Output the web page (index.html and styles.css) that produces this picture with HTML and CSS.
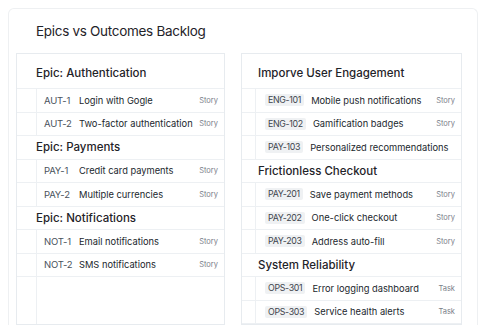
FILE: index.html
```html
<!DOCTYPE html>
<html lang="en">
<head>
  <meta charset="UTF-8">
  <title>Epics vs Outcomes Backlog</title>
  <link rel="stylesheet" href="styles.css">
</head>
<body>

  <div class="board">
    <h1 class="board-title">Epics vs Outcomes Backlog</h1>

    <div class="columns">
      <!-- Epics column -->
      <div class="panel panel-epics">
        <div class="group-title first">Epic: Authentication</div>
        <div class="row"><div class="row-body"><span class="key">AUT-1</span><span class="name">Login with Gogle</span><span class="type">Story</span></div></div>
        <div class="row"><div class="row-body"><span class="key">AUT-2</span><span class="name">Two-factor authentication</span><span class="type">Story</span></div></div>

        <div class="group-title">Epic: Payments</div>
        <div class="row"><div class="row-body"><span class="key">PAY-1</span><span class="name">Credit card payments</span><span class="type">Story</span></div></div>
        <div class="row"><div class="row-body"><span class="key">PAY-2</span><span class="name">Multiple currencies</span><span class="type">Story</span></div></div>

        <div class="group-title">Epic: Notifications</div>
        <div class="row"><div class="row-body"><span class="key">NOT-1</span><span class="name">Email notifications</span><span class="type">Story</span></div></div>
        <div class="row"><div class="row-body"><span class="key">NOT-2</span><span class="name">SMS notifications</span><span class="type">Story</span></div></div>

        <div class="filler"><div class="row-body"></div></div>
      </div>

      <!-- Outcomes column -->
      <div class="panel panel-outcomes">
        <div class="group-title first">Imporve User Engagement</div>
        <div class="row"><div class="row-body"><span class="key">ENG-101</span><span class="name">Mobile push notifications</span><span class="type">Story</span></div></div>
        <div class="row"><div class="row-body"><span class="key">ENG-102</span><span class="name">Gamification badges</span><span class="type">Story</span></div></div>
        <div class="row"><div class="row-body"><span class="key">PAY-103</span><span class="name">Personalized recommendations</span></div></div>

        <div class="group-title">Frictionless Checkout</div>
        <div class="row"><div class="row-body"><span class="key">PAY-201</span><span class="name">Save payment methods</span><span class="type">Story</span></div></div>
        <div class="row"><div class="row-body"><span class="key">PAY-202</span><span class="name">One-click checkout</span><span class="type">Story</span></div></div>
        <div class="row"><div class="row-body"><span class="key">PAY-203</span><span class="name">Address auto-fill</span><span class="type">Story</span></div></div>

        <div class="group-title">System Reliability</div>
        <div class="row"><div class="row-body"><span class="key">OPS-301</span><span class="name">Error logging dashboard</span><span class="type">Task</span></div></div>
        <div class="row"><div class="row-body"><span class="key">OPS-303</span><span class="name">Service health alerts</span><span class="type">Task</span></div></div>
      </div>
    </div>
  </div>

</body>
</html>
```

FILE: styles.css
```css
* {
  margin: 0;
  padding: 0;
  box-sizing: border-box;
}

body {
  font-family: 'Inter', 'Liberation Sans', sans-serif;
  background-color: #fff;
  color: #1f2329;
  overflow: hidden;
}

.board {
  margin: 8px 8px 0 8px;
  width: 470px;
  border: 1px solid #eef0f2;
  border-bottom: none;
  border-radius: 6px 6px 0 0;
  padding: 0 7px;
}

.board-title {
  font-size: 13.5px;
  font-weight: 400;
  letter-spacing: -0.3px;
  line-height: 20px;
  padding: 12px 0 12px 20px;
  color: #1f2329;
}

.columns {
  display: grid;
  grid-template-columns: 209px 221px;
  gap: 16px;
  align-items: stretch;
}

.panel {
  display: flex;
  flex-direction: column;
  border: 1px solid #e7ebef;
}

.group-title {
  height: 23.5px;
  display: flex;
  align-items: center;
  font-size: 11.5px;
  font-weight: 500;
  color: #1f2329;
  border-bottom: 1px solid #edf0f3;
}

.group-title.first {
  height: 35px;
  padding-top: 3px;
}

.panel-epics .group-title {
  padding-left: 19px;
}

.panel-outcomes .group-title {
  padding-left: 16px;
}

.row {
  display: flex;
  height: 23.5px;
  border-bottom: 1px solid #edf0f3;
}

.row-body {
  flex: 1;
  display: flex;
  align-items: center;
  border-left: 1px solid #edf0f3;
  padding-right: 6px;
  font-size: 9.3px;
  white-space: nowrap;
}

.panel-epics .row-body {
  margin-left: 19px;
  padding-left: 7px;
}

.panel-outcomes .row-body {
  margin-left: 13px;
  padding-left: 9px;
}

.filler {
  flex: 1;
  display: flex;
}

.key {
  color: #4a525c;
}

.panel-epics .key {
  width: 35px;
  font-size: 9.5px;
  letter-spacing: -0.2px;
}

.panel-outcomes .key {
  font-size: 8.8px;
  letter-spacing: -0.3px;
  line-height: 12px;
  background-color: #eff1f3;
  border-radius: 2px;
  padding: 0 3px;
  margin-right: 7px;
  color: #3d444c;
}

.name {
  flex: 1;
  color: #22272d;
}

.type {
  font-size: 7.5px;
  color: #7a8089;
}
```
